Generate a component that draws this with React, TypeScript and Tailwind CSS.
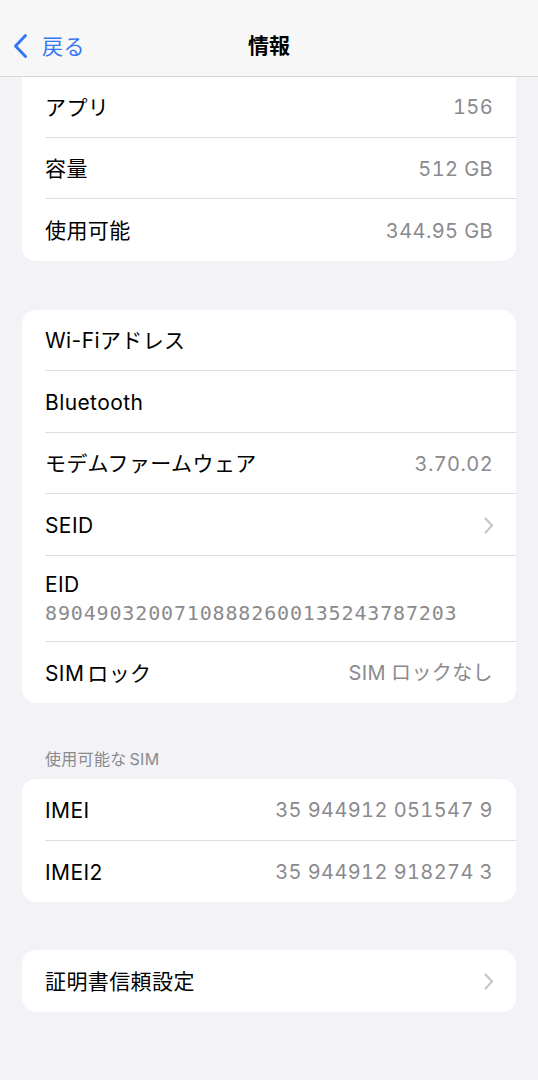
import React from "react";

const font = { fontFamily: 'Inter, "Noto Sans CJK JP", sans-serif' };

function Chevron() {
  return (
    <svg width="10" height="17" viewBox="0 0 10 17" fill="none">
      <path d="M1.5 1.5 L8 8.5 L1.5 15.5" stroke="#c4c4c7" strokeWidth="2" strokeLinecap="round" strokeLinejoin="round" />
    </svg>
  );
}

function Row({ label, value, chevron, last }: { label: React.ReactNode; value?: React.ReactNode; chevron?: boolean; last?: boolean }) {
  return (
    <div className={`ml-[23px] pr-[23px] h-[61.5px] pt-[2px] flex items-center justify-between ${last ? "" : "border-b border-[#dedee2]"}`}>
      <span className="text-[21px] tracking-[0.4px] text-black">{label}</span>
      {value && <span className="text-[20px] tracking-[0.4px] text-[#8a8a8e] tabular-nums">{value}</span>}
      {chevron && <span className="mr-[-1px]"><Chevron /></span>}
    </div>
  );
}

export default function App() {
  return (
    <div className="w-[538px] h-[1080px] bg-[#f2f2f7] overflow-hidden" style={font}>
      <div className="h-[77px] bg-[#f7f7f7] border-b border-[#d6d6d8] relative flex items-center justify-center">
        <div className="absolute left-[12px] top-[33px] flex items-center">
          <svg width="17" height="26" viewBox="0 0 17 26" fill="none">
            <path d="M13.5 2.5 L3.5 13 L13.5 23.5" stroke="#3478f6" strokeWidth="3" strokeLinecap="round" strokeLinejoin="round" />
          </svg>
          <span className="ml-[13px] text-[21px] tracking-[0.4px] text-[#3478f6] leading-none">戻る</span>
        </div>
        <span className="text-[21px] font-bold text-black mt-[16px]">情報</span>
      </div>

      <div className="mx-[22px] bg-white rounded-b-[14px] mt-[-1px]">
        <Row label="アプリ" value="156" />
        <Row label="容量" value="512 GB" />
        <Row label="使用可能" value="344.95 GB" last />
      </div>

      <div className="mx-[22px] mt-[49px] bg-white rounded-[14px]">
        <Row label="Wi-Fiアドレス" />
        <Row label="Bluetooth" />
        <Row label="モデムファームウェア" value="3.70.02" />
        <Row label="SEID" chevron />
        <div className="ml-[23px] pr-[23px] h-[86px] pt-[1px] flex flex-col justify-center border-b border-[#dedee2]">
          <span className="text-[21px] tracking-[0.4px] text-black leading-[28px]">EID</span>
          <span className="text-[20px] text-[#8a8a8e] leading-[28px] tracking-[0.85px]" style={{ fontFamily: '"DejaVu Sans Mono", monospace' }}>89049032007108882600135243787203</span>
        </div>
        <Row
          label={<><span className="mr-[3px]">SIM</span>ロック</>}
          value={<><span className="mr-[5px]">SIM</span>ロックなし</>}
          last
        />
      </div>

      <div className="ml-[45px] mt-[47px] text-[16px] tracking-[0.3px] text-[#8a8a8e] leading-[18px]">使用可能な<span className="ml-[3px]">SIM</span></div>
      <div className="mx-[22px] mt-[11px] bg-white rounded-[14px]">
        <Row label="IMEI" value="35 944912 051547 9" />
        <Row label="IMEI2" value="35 944912 918274 3" last />
      </div>

      <div className="mx-[22px] mt-[48px] bg-white rounded-[14px]">
        <Row label="証明書信頼設定" chevron last />
      </div>
    </div>
  );
}
